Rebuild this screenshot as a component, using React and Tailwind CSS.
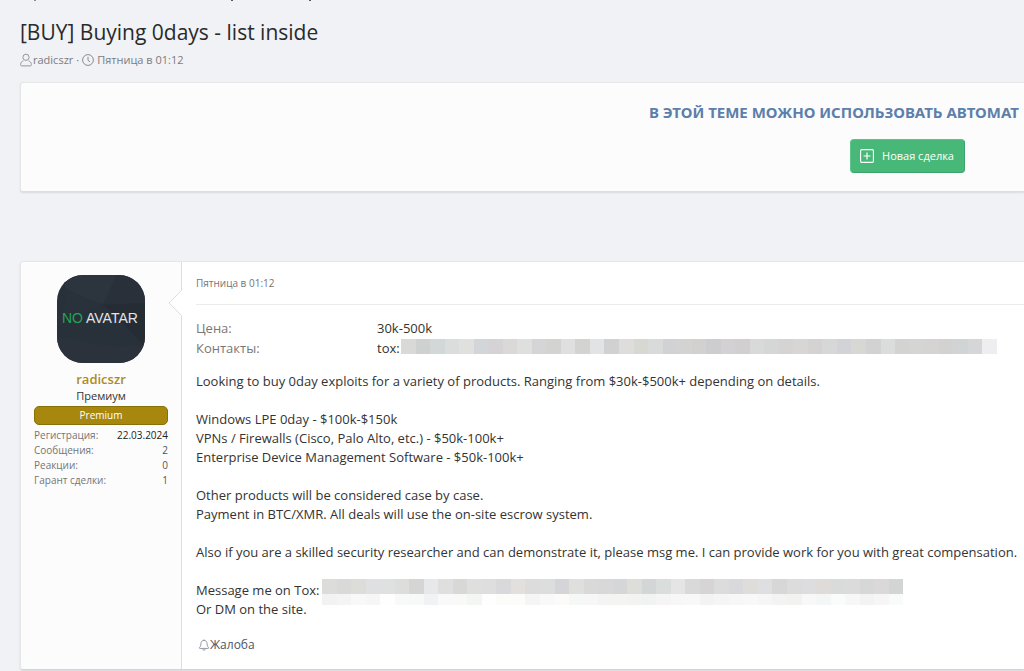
const contactCells = [
  '#d9dad8', '#cfd1d0', '#d2d8d8', '#dbdddd', '#e0e0df', '#d2d6d9', '#d5d3d5', '#dbd9d8', '#dee0dd', '#d5d5d8', '#d3d3d2',
  '#dfdfdf', '#d3d3d2', '#e2e3e5', '#d1d1d1', '#dedddb', '#d7d8d2', '#d8dbda', '#d1d2d4', '#d3d3d4', '#d2d1d0', '#cdcdd0',
  '#d3d1d3', '#d2cfd1', '#d8dad9', '#d4d7d6', '#d6d4d2', '#d7d6d4', '#d4d3d1', '#d7d7d7', '#d2d3d6', '#d7d8d3', '#d2d2d3',
  '#dadddc', '#d3d4d1', '#d5d5d3', '#d5d4d2', '#d2d2d1', '#d0d4d5', '#d5d6d8', '#eeeef0',
];

const toxCells = [
  '#dcdcdb', '#d9d9d7', '#dcddd9', '#dfe0e2', '#dfe0e0', '#dddddb', '#d5d5d6', '#e7e8ea', '#dedfde', '#d8d8d7', '#dfdfde',
  '#dededf', '#d9d9dc', '#e2dfdd', '#dbdcdb', '#dcdddd', '#d5d5d9', '#dfdfde', '#d9d9d8', '#d8d8d9', '#d5d6d8', '#dddeda',
  '#d2d6d7', '#d9dddc', '#e5e5e5', '#d9d9da', '#d7d4d6', '#dcdcdc', '#d9d9dd', '#dfddda', '#dddfe0', '#d7d7d7', '#dcdcdc',
  '#dddde0', '#dfdbd8', '#d9dbda', '#dadbda', '#d6d8d7', '#dad8d8', '#d3d5d4',
];

const toxShade = [
  '#f2f2f2', '#f4f4f4', '#f8f8f9', '#f6f6f6', '#fefefe', '#f8f9f9', '#f7f9f9', '#f1f2f3', '#f8f9f8', '#f9f9f8', '#f4f5f5',
  '#fefefe', '#fcfcfa', '#fcfcfb', '#f4f5f4', '#f9f9f9', '#fbfcfa', '#f6f8f8', '#f7f7f7', '#f4f4f4', '#f4f4f2', '#f3f3f3',
  '#f1f3f3', '#f5f5f5', '#f7f7f7', '#f8f8f8', '#f3f3f3', '#f5f5f5', '#f7f7f8', '#f8f8f8', '#f6f6f7', '#f3f3f3', '#f2f2f1',
  '#f8f8f8', '#f5f7f7', '#f9fcfb', '#f7f7f7', '#f3f3f3', '#f6f6f7', '#f9fbfa',
];

const stats = [
  { label: 'Регистрация:', value: '22.03.2024', strong: true },
  { label: 'Сообщения:', value: '2' },
  { label: 'Реакции:', value: '0' },
  { label: 'Гарант сделки:', value: '1' },
];

function Cells({ colors, className }) {
  return (
    <div className={`flex ${className}`}>
      {colors.map((color, i) => (
        <span key={i} className="flex-1" style={{ backgroundColor: color }} />
      ))}
    </div>
  );
}

function UserIcon() {
  return (
    <svg viewBox="0 0 12 14" className="w-3 h-[14px] mr-px" fill="none" stroke="#969696" aria-hidden="true">
      <circle cx="6" cy="4.3" r="3.1" />
      <path d="M3.4 7.9C1.6 8.5.6 9.8.6 11.4v.5c0 .6.4 1 1 1h8.8c.6 0 1-.4 1-1v-.5c0-1.6-1-2.9-2.8-3.5" />
    </svg>
  );
}

function ClockIcon() {
  return (
    <svg viewBox="0 0 12 12" className="w-3 h-3 mr-[3px]" fill="none" stroke="#8c8c8c" aria-hidden="true">
      <circle cx="6" cy="6" r="5.4" />
      <path d="M6 2.8V6.3L8 8" />
    </svg>
  );
}

function PlusBoxIcon() {
  return (
    <svg viewBox="0 0 14 14" className="w-[14px] h-[14px]" fill="none" stroke="#fff" aria-hidden="true">
      <rect x="0.6" y="0.6" width="12.8" height="12.8" rx="1.2" strokeWidth="1.1" />
      <path d="M7 3.5v7M3.5 7h7" strokeWidth="1.2" />
    </svg>
  );
}

function BellIcon() {
  return (
    <svg viewBox="0 0 12 12" className="w-3 h-3" fill="none" stroke="#8a8f9d" strokeWidth="0.9" aria-hidden="true">
      <path d="M6 .4v1M6 1.4C4 1.4 2.9 2.9 2.9 4.7c0 2.3-.7 3.2-1.5 3.9-.3.3-.1.8.3.8h8.6c.4 0 .6-.5.3-.8-.8-.7-1.5-1.6-1.5-3.9C9.1 2.9 8 1.4 6 1.4zM4.7 9.6c0 1 .5 1.6 1.3 1.6s1.3-.6 1.3-1.6" />
    </svg>
  );
}

function Avatar() {
  return (
    <svg viewBox="0 0 88 88" className="w-[88px] h-[88px] rounded-[26px]" role="img" aria-label="No avatar">
      <rect width="88" height="88" fill="#28303a" />
      <path d="M0 0H60L46 30 12 16z" fill="#2c343d" />
      <path d="M60 0H88V28L46 30z" fill="#293039" />
      <path d="M46 30L88 28V72L58 40z" fill="#262c34" />
      <path d="M0 62L58 72 88 70V88H0z" fill="#2b323c" />
      <path d="M12 16L46 30 0 52z" fill="#29313b" />
      <text x="5" y="48" fontSize="14" fontFamily="Liberation Sans, sans-serif" fill="#23a455">NO</text>
      <text x="29" y="48" fontSize="14" fontFamily="Liberation Sans, sans-serif" fill="#e3e4e6">AVATAR</text>
    </svg>
  );
}

function UserPanel() {
  return (
    <aside className="relative w-[161px] shrink-0 px-[13px] pt-[13px] bg-[#fcfcfc] border-r border-[#dedede] flex flex-col items-center">
      <Avatar />
      <a href="#radicszr" className="mt-[7px] text-[13px] leading-[18px] font-semibold text-[#ac8a1f]">radicszr</a>
      <div className="text-[11px] leading-[16px] text-[#333]">Премиум</div>
      <div className="mt-[2px] w-full h-[19px] rounded-[5px] border border-[#8b7007] bg-[#a8870f] text-center text-[10px] leading-[17px] text-white">
        Premium
      </div>
      <dl className="w-full mt-[3px] text-[10px] leading-[15px]">
        {stats.map(item => (
          <div key={item.label} className="flex justify-between">
            <dt className="text-[#757575]">{item.label}</dt>
            <dd className={item.strong ? 'text-[#222]' : 'text-[#555]'}>{item.value}</dd>
          </div>
        ))}
      </dl>
      <svg viewBox="0 0 14 26" className="absolute -right-px top-7 w-[14px] h-[26px]" aria-hidden="true">
        <path d="M14 0L1 13 14 26z" fill="#fff" />
        <path d="M13.5.5L1 13 13.5 25.5" fill="none" stroke="#dedede" />
      </svg>
    </aside>
  );
}

function Message() {
  return (
    <article className="flex-1 min-w-0 pl-[14px] pt-[13px] pb-4 bg-white text-[13px] leading-[19px] text-[#333] whitespace-nowrap">
      <header className="pb-[13px] border-b border-[#ebebeb] text-[10px] leading-[16px] text-[#757575]">
        <time>Пятница в 01:12</time>
      </header>

      <dl className="mt-[14px] grid grid-cols-[181px_1fr] gap-y-px">
        <dt className="text-[#777]">Цена:</dt>
        <dd>30k-500k</dd>
        <dt className="text-[#777]">Контакты:</dt>
        <dd className="flex">
          <span className="w-6">tox:</span>
          <Cells colors={contactCells} className="w-[596px] h-[15px] shrink-0" />
        </dd>
      </dl>

      <div className="mt-[14px] flex flex-col gap-[19px]">
        <p>Looking to buy 0day exploits for a variety of products. Ranging from $30k-$500k+ depending on details.</p>
        <p>
          Windows LPE 0day - $100k-$150k<br />
          VPNs / Firewalls (Cisco, Palo Alto, etc.) - $50k-100k+<br />
          Enterprise Device Management Software - $50k-100k+
        </p>
        <p>
          Other products will be considered case by case.<br />
          Payment in BTC/XMR. All deals will use the on-site escrow system.
        </p>
        <p>Also if you are a skilled security researcher and can demonstrate it, please msg me. I can provide work for you with great compensation.</p>
        <div>
          <div className="flex h-[19px]">
            <span className="w-[126px] shrink-0">Message me on Tox:</span>
            <div className="-mt-[2px] w-[581px] shrink-0">
              <Cells colors={toxCells} className="h-[15px]" />
              <Cells colors={toxShade} className="h-[11px]" />
            </div>
          </div>
          <p>Or DM on the site.</p>
        </div>
      </div>

      <footer className="mt-[18px] pl-[2px] flex">
        <a href="#report" className="flex items-center text-[12px] leading-[16px] text-[#4c5568]">
          <BellIcon />
          Жалоба
        </a>
      </footer>
    </article>
  );
}

export default function App() {
  return (
    <div className="min-h-screen overflow-hidden pl-5 bg-[#f0f2f6] font-['Open_Sans',sans-serif]">
      {/* tail of the breadcrumb line above the title */}
      <div className="flex h-[2px] pl-[14px]" aria-hidden="true">
        <span className="w-[2px] h-px bg-[#8b8d92]" />
        <span className="w-[2px] h-px ml-[195px] bg-[#55575c]" />
        <span className="w-[2px] h-px ml-[76px] bg-[#55575c]" />
      </div>

      <h1 className="pt-4 text-[21px] leading-[28px] text-[#2a2a2a] whitespace-nowrap">[BUY] Buying 0days - list inside</h1>
      <div className="mt-[6px] h-4 flex items-center text-[11px] leading-[16px] text-[#7c7c7c] whitespace-nowrap">
        <UserIcon />
        <a href="#radicszr">radicszr</a>
        <span className="mx-[3px]">·</span>
        <ClockIcon />
        <time>Пятница в 01:12</time>
      </div>

      <section className="mt-[14px] h-[110px] overflow-hidden rounded-l-[3px] border border-r-0 border-[#e6e6e6] border-b-[#dedede] bg-[#fcfcfc] shadow-[0_1px_2px_rgba(0,0,0,0.1)]">
        <div className="w-[516px] ml-[628px] pt-[18px]">
          <h2 className="font-['Noto_Sans',sans-serif] text-[15px] leading-[22px] font-bold text-[#5c7fab] whitespace-nowrap">
            В ЭТОЙ ТЕМЕ МОЖНО ИСПОЛЬЗОВАТЬ АВТОМАТ
          </h2>
          <button className="mx-auto mt-4 w-[115px] h-[34px] flex items-center justify-center gap-2 rounded-[4px] border border-[#5cc48a] border-r-[#3da56b] border-b-[#3da56b] bg-[#47b877] text-[11px] leading-[16px] text-white">
            <PlusBoxIcon />
            Новая сделка
          </button>
        </div>
      </section>

      <section className="mt-[69px] flex overflow-hidden rounded-l-[3px] border border-r-0 border-[#e6e6e6] border-b-[#d4d4d4] shadow-[0_1px_2px_rgba(0,0,0,0.12)]">
        <UserPanel />
        <Message />
      </section>
    </div>
  );
}
